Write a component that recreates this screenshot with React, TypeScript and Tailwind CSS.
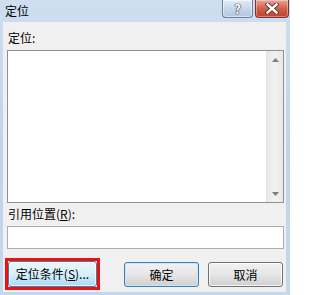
import React from "react";

const font = { fontFamily: '"Noto Sans CJK SC", "Noto Sans", sans-serif' };

function HelpButton() {
  return (
    <div className="flex h-[18px] w-[31px] items-center justify-center rounded-b-[4px] border border-t-0 border-[#6d7f99] bg-gradient-to-b from-[#e4ecf6] via-[#c7d6ea] to-[#b3c7e1] shadow-[inset_0_0_0_1px_rgba(255,255,255,0.5)]">
      <span
        className="text-[13px] font-bold leading-none text-white"
        style={{ textShadow: "0 0 1px #333, 0 0 1px #333, 0 0 1px #333" }}
      >
        ?
      </span>
    </div>
  );
}

function CloseButton() {
  return (
    <div className="flex h-[18px] w-[34px] items-center justify-center rounded-b-[4px] border border-t-0 border-[#7a342a] bg-gradient-to-b from-[#e8a595] via-[#d1604a] to-[#c2402c] shadow-[inset_0_0_0_1px_rgba(255,255,255,0.35)]">
      <svg width="14" height="11" viewBox="0 0 14 11">
        <path d="M2.5 1.5 L11.5 9.5 M11.5 1.5 L2.5 9.5" stroke="#5a2a22" strokeWidth="4.2" strokeLinecap="square" />
        <path d="M2.5 1.5 L11.5 9.5 M11.5 1.5 L2.5 9.5" stroke="#ffffff" strokeWidth="2.4" strokeLinecap="square" />
      </svg>
    </div>
  );
}

function Scrollbar() {
  return (
    <div className="flex w-[17px] flex-col justify-between border-l border-[#e3e3e3] bg-gradient-to-r from-[#e8e8e8] via-[#f2f2f2] to-[#e8e8e8]">
      <div className="flex h-[17px] items-center justify-center">
        <svg width="7" height="4" viewBox="0 0 7 4">
          <path d="M0 4 L3.5 0 L7 4 Z" fill="#7d7d7d" />
        </svg>
      </div>
      <div className="flex h-[17px] items-center justify-center">
        <svg width="7" height="4" viewBox="0 0 7 4">
          <path d="M0 0 L3.5 4 L7 0 Z" fill="#7d7d7d" />
        </svg>
      </div>
    </div>
  );
}

export default function App() {
  return (
    <div
      className="flex h-[295px] w-[290px] flex-col bg-gradient-to-b from-[#cfdef1] via-[#bfd3ea] to-[#c3d7ee] text-[12px] text-black"
      style={font}
    >
      {/* Title bar */}
      <div className="flex h-[22px] items-start justify-between pl-[5px] pr-[1px]">
        <span className="mt-[3px] leading-[16px]">定位</span>
        <div className="flex gap-[2px]">
          <HelpButton />
          <CloseButton />
        </div>
      </div>

      {/* Client area */}
      <div className="mb-[3px] ml-[3px] mr-[4px] flex flex-1 flex-col bg-[#f0f0f0]">
        <div className="ml-[5px] mt-[8px] leading-[16px]">定位:</div>
        <div className="ml-[4px] mt-[4px] flex h-[153px] w-[277px] border border-[#8e9296] bg-white">
          <div className="flex-1" />
          <Scrollbar />
        </div>

        <div className="ml-[5px] mt-[3px] leading-[16px]">
          引用位置(<span className="underline">R</span>):
        </div>
        <div className="ml-[4px] mt-[4px] h-[23px] w-[277px] border border-[#abadb3] bg-white" />

        <div className="mt-[9px] flex items-start">
          <div className="ml-[2px] border-[3px] border-[#ee1111]">
            <button className="flex h-[26px] w-[89px] items-center justify-center rounded-[3px] border border-[#3c7fb1] bg-gradient-to-b from-[#eaf6fd] via-[#d9f0fc] to-[#a7d9f5] leading-none shadow-[inset_0_0_0_1px_rgba(255,255,255,0.7)]">
              定位条件(<span className="underline">S</span>)...
            </button>
          </div>
          <button className="ml-[24px] mt-[4px] flex h-[25px] w-[75px] items-center justify-center rounded-[3px] border border-[#3c7fb1] bg-gradient-to-b from-[#f2f2f2] via-[#e6e6e6] to-[#cfcfcf] leading-none shadow-[inset_0_0_0_1px_#cbe6f7]">
            确定
          </button>
          <button className="ml-[9px] mt-[4px] flex h-[25px] w-[75px] items-center justify-center rounded-[3px] border border-[#707070] bg-gradient-to-b from-[#f2f2f2] via-[#e6e6e6] to-[#cfcfcf] leading-none shadow-[inset_0_0_0_1px_rgba(255,255,255,0.8)]">
            取消
          </button>
        </div>
      </div>
    </div>
  );
}
